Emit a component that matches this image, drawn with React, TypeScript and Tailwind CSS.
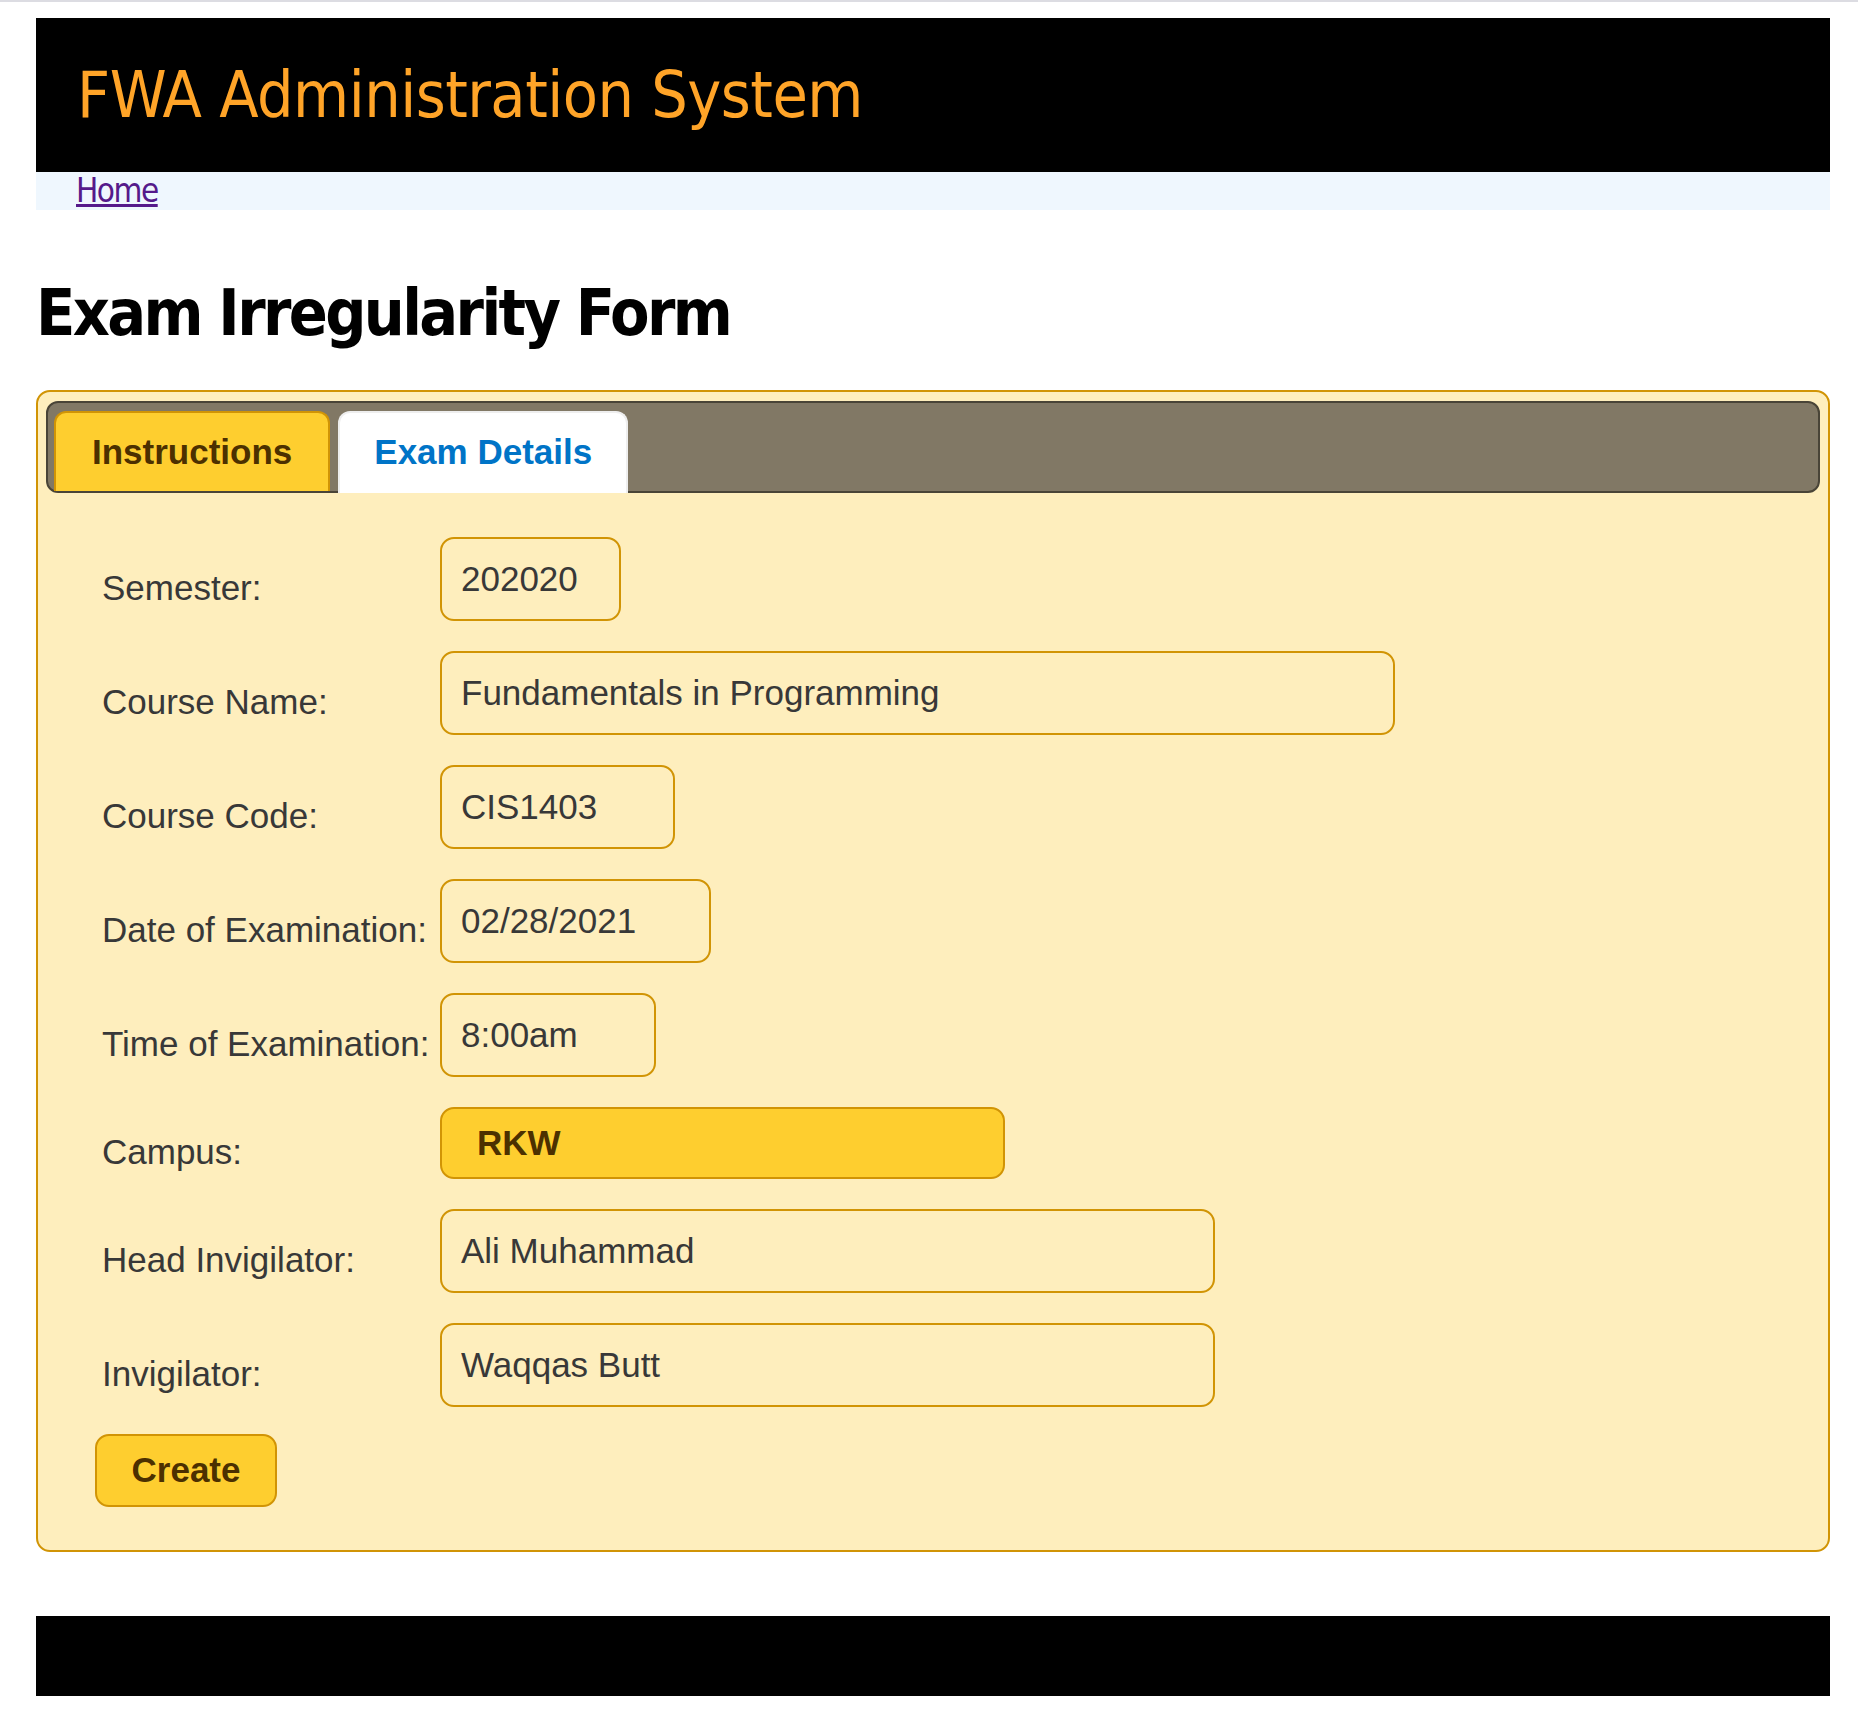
import React from "react";

type Field = {
	label: string;
	value: string;
	width: string;
	select?: boolean;
};

const fields: Field[] = [
	{ label: "Semester:", value: "202020", width: "w-[181px]" },
	{ label: "Course Name:", value: "Fundamentals in Programming", width: "w-[955px]" },
	{ label: "Course Code:", value: "CIS1403", width: "w-[235px]" },
	{ label: "Date of Examination:", value: "02/28/2021", width: "w-[271px]" },
	{ label: "Time of Examination:", value: "8:00am", width: "w-[216px]" },
	{ label: "Campus:", value: "RKW", width: "w-[565px]", select: true },
	{ label: "Head Invigilator:", value: "Ali Muhammad", width: "w-[775px]" },
	{ label: "Invigilator:", value: "Waqqas Butt", width: "w-[775px]" },
];

export default function App() {
	return (
		<div className="min-h-screen bg-white">
			<div className="h-[2px] bg-[#dcdce2]" />
			<div className="ml-[36px] w-[1794px]">
				{/* header */}
				<div className="mt-[16px] flex h-[154px] items-center bg-black pl-[41px]">
					<div className="font-['DejaVu_Sans_Condensed','DejaVu_Sans',sans-serif] text-[64px] leading-[64px] tracking-[-0.5px] text-[#ffa428]">
						FWA Administration System
					</div>
				</div>
				<div className="h-[38px] bg-[#eff7fe] pl-[40px]">
					<a
						href="#"
						className="font-['DejaVu_Sans_Condensed','DejaVu_Sans',sans-serif] text-[33px] leading-[38px] tracking-[-1.5px] text-[#551a8b] underline"
					>
						Home
					</a>
				</div>

				<h1 className="mt-[71px] font-['DejaVu_Sans_Condensed','DejaVu_Sans',sans-serif] text-[64px] font-bold leading-[64px] tracking-[-2.6px] text-black">
					Exam Irregularity Form
				</h1>

				{/* tabs panel */}
				<div className="mt-[45px] rounded-[14px] border-2 border-[#d19405] bg-[#feeebd] px-[8px] pt-[9px] pb-[43px] font-['Liberation_Sans',Arial,sans-serif]">
					<div className="flex h-[92px] items-end gap-[8px] rounded-[12px] border-2 border-[#494437] bg-[#817865] pl-[6px]">
						<div className="rounded-t-[12px] border-2 border-b-0 border-[#d19405] bg-[#fece2f] px-[36px] pt-[19px] pb-[19px] text-[35px] font-bold leading-[40px] text-[#4c3000]">
							Instructions
						</div>
						<div className="-mb-[2px] rounded-t-[12px] border-2 border-b-0 border-[#eeeeee] bg-white px-[34px] pt-[19px] pb-[21px] text-[35px] font-bold leading-[40px] text-[#0074c7]">
							Exam Details
						</div>
					</div>

					<div className="mt-[44px] pl-[49px]">
						<div className="flex flex-col gap-[30px]">
							{fields.map((f) => (
								<div key={f.label} className="flex items-center">
									<div className="w-[345px] shrink-0 pl-[7px] pt-[18px] text-[35px] leading-[40px] text-[#383838]">
										{f.label}
									</div>
									{f.select ? (
										<div
											className={`flex h-[72px] ${f.width} items-center rounded-[14px] border-2 border-[#d19405] bg-[#fece2f] pl-[35px] text-[35px] font-bold text-[#4c3000]`}
										>
											{f.value}
										</div>
									) : (
										<input
											readOnly
											value={f.value}
											className={`h-[84px] ${f.width} rounded-[14px] border-2 border-[#d19405] bg-transparent px-[19px] text-[35px] text-[#383838] outline-none`}
										/>
									)}
								</div>
							))}
						</div>
						<button className="mt-[27px] h-[73px] w-[182px] rounded-[14px] border-2 border-[#d19405] bg-[#fece2f] text-[35px] font-bold text-[#4c3000]">
							Create
						</button>
					</div>
				</div>

				{/* footer */}
				<div className="mt-[64px] h-[80px] bg-black" />
			</div>
		</div>
	);
}
